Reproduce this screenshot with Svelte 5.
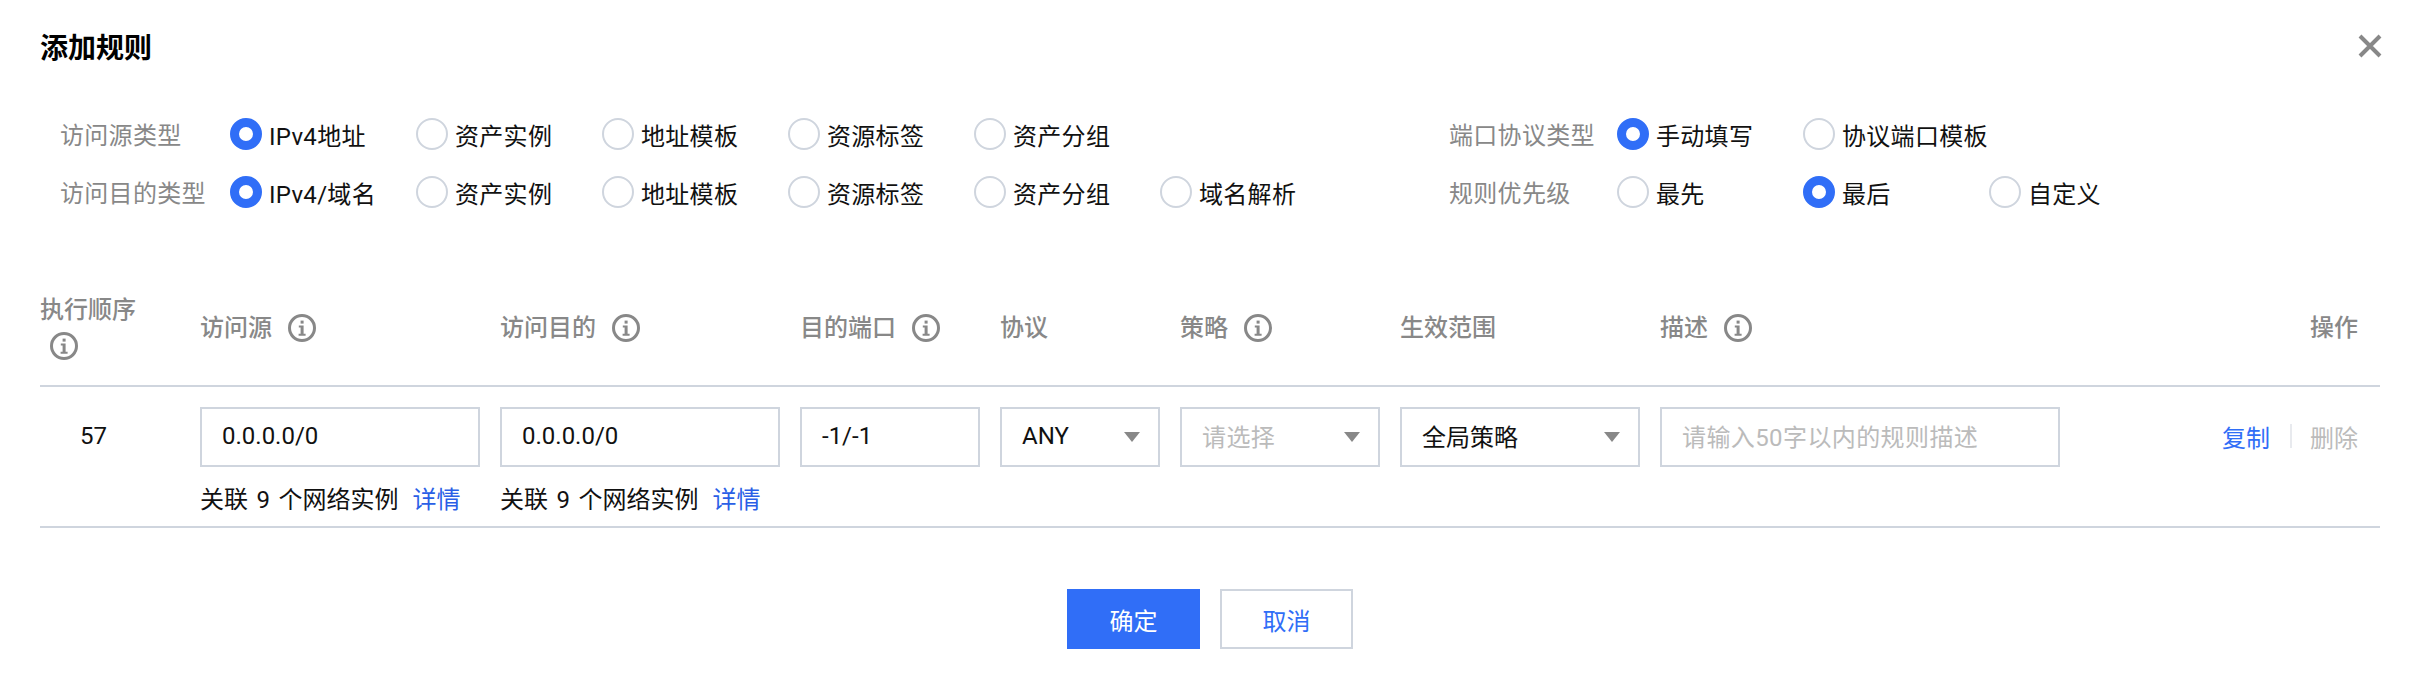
<script>
  const sourceTypes = [
    { label: 'IPv4地址', checked: true },
    { label: '资产实例' },
    { label: '地址模板' },
    { label: '资源标签' },
    { label: '资产分组' }
  ];
  const targetTypes = [
    { label: 'IPv4/域名', checked: true },
    { label: '资产实例' },
    { label: '地址模板' },
    { label: '资源标签' },
    { label: '资产分组' },
    { label: '域名解析' }
  ];
  const portTypes = [{ label: '手动填写', checked: true }, { label: '协议端口模板' }];
  const priorities = [{ label: '最先' }, { label: '最后', checked: true }, { label: '自定义' }];
</script>

{#snippet radios(options)}
  <div class="options">
    {#each options as option}
      <span class="option">
        <span class="radio" class:checked={option.checked}></span>
        {option.label}
      </span>
    {/each}
  </div>
{/snippet}

{#snippet info()}
  <svg class="info" viewBox="0 0 28 28" aria-hidden="true">
    <circle cx="14" cy="14" r="12.5" fill="none" stroke="#888" stroke-width="3" />
    <rect x="12.6" y="6.6" width="3" height="3" fill="#888" />
    <path d="M10.8 11.6h4.8v8.2h2v2h-7v-2h2v-6.2h-1.8z" fill="#888" />
  </svg>
{/snippet}

{#snippet caret()}
  <svg class="caret" viewBox="0 0 16 10" aria-hidden="true">
    <path d="M0 0h16L8 10z" fill="#888" />
  </svg>
{/snippet}

<div class="dialog">
  <header class="head">
    <h2>添加规则</h2>
    <svg class="close" viewBox="0 0 24 24" aria-label="关闭">
      <path d="M2 2l20 20M22 2L2 22" stroke="#888" stroke-width="4" fill="none" />
    </svg>
  </header>

  <section class="filters">
    <div class="filter-group left">
      <div class="filter-row">
        <span class="filter-label">访问源类型</span>
        {@render radios(sourceTypes)}
      </div>
      <div class="filter-row">
        <span class="filter-label">访问目的类型</span>
        {@render radios(targetTypes)}
      </div>
    </div>
    <div class="filter-group right">
      <div class="filter-row">
        <span class="filter-label">端口协议类型</span>
        {@render radios(portTypes)}
      </div>
      <div class="filter-row">
        <span class="filter-label">规则优先级</span>
        {@render radios(priorities)}
      </div>
    </div>
  </section>

  <table>
    <colgroup>
      <col class="c-order" />
      <col class="c-addr" />
      <col class="c-addr" />
      <col class="c-port" />
      <col class="c-proto" />
      <col class="c-policy" />
      <col class="c-scope" />
      <col />
    </colgroup>
    <thead>
      <tr>
        <th>执行顺序<br />{@render info()}</th>
        <th>访问源{@render info()}</th>
        <th>访问目的{@render info()}</th>
        <th>目的端口{@render info()}</th>
        <th>协议</th>
        <th>策略{@render info()}</th>
        <th>生效范围</th>
        <th class="split">
          <span>描述{@render info()}</span>
          <span>操作</span>
        </th>
      </tr>
    </thead>
    <tbody>
      <tr>
        <td><div class="order">57</div></td>
        <td>
          <div class="field w280">0.0.0.0/0</div>
          <div class="hint">关联 9 个网络实例<a href="#detail">详情</a></div>
        </td>
        <td>
          <div class="field w280">0.0.0.0/0</div>
          <div class="hint">关联 9 个网络实例<a href="#detail">详情</a></div>
        </td>
        <td><div class="field w180">-1/-1</div></td>
        <td><div class="field w160">ANY{@render caret()}</div></td>
        <td><div class="field w200 muted">请选择{@render caret()}</div></td>
        <td><div class="field w240">全局策略{@render caret()}</div></td>
        <td class="split">
          <div class="field w400 muted">请输入50字以内的规则描述</div>
          <div class="actions">
            <a href="#copy">复制</a>
            <i></i>
            <span>删除</span>
          </div>
        </td>
      </tr>
    </tbody>
  </table>

  <footer class="foot">
    <button class="primary">确定</button>
    <button>取消</button>
  </footer>
</div>

<style>
  :global(body) {
    margin: 0;
    background: #fff;
  }

  .dialog {
    width: 2424px;
    height: 692px;
    overflow: hidden;
    font-family: Roboto, 'Noto Sans CJK SC', sans-serif;
    font-size: 24px;
    color: #111;
  }

  .head {
    height: 92px;
    padding: 0 42px 0 40px;
    display: flex;
    align-items: center;
    justify-content: space-between;
  }

  h2 {
    margin: 0;
    font-size: 28px;
    font-weight: 700;
    color: #000;
  }

  .close {
    width: 24px;
    height: 24px;
  }

  .filters {
    display: flex;
    padding: 13px 0 0 60px;
  }

  .filter-group.left {
    width: 1389px;
  }

  .filter-row {
    height: 58px;
    display: flex;
    align-items: center;
    letter-spacing: 0.3px;
  }

  .filter-label {
    padding-bottom: 2px;
    color: #888;
  }

  .left .filter-label {
    width: 170px;
  }

  .right .filter-label {
    width: 168px;
  }

  .options {
    display: flex;
  }

  .option {
    width: 186px;
    display: flex;
    align-items: center;
    gap: 7px;
  }

  .radio {
    width: 32px;
    height: 32px;
    box-sizing: border-box;
    border: 2px solid #cfd5de;
    border-radius: 50%;
  }

  .radio.checked {
    border: 9px solid #306ef7;
  }

  table {
    width: 2340px;
    margin: 50px 0 0 40px;
    border-collapse: collapse;
    table-layout: fixed;
  }

  .c-order {
    width: 160px;
  }

  .c-addr {
    width: 300px;
  }

  .c-port {
    width: 200px;
  }

  .c-proto {
    width: 180px;
  }

  .c-policy {
    width: 220px;
  }

  .c-scope {
    width: 260px;
  }

  th {
    padding: 21px 0;
    line-height: 36px;
    font-weight: 500;
    color: #888;
    text-align: left;
    border-bottom: 2px solid #cfd5de;
  }

  td {
    padding: 20px 0 10px;
    vertical-align: top;
    border-bottom: 2px solid #cfd5de;
  }

  .split > :first-child {
    float: left;
  }

  .split > :last-child {
    float: right;
    padding-right: 22px;
  }

  .info {
    width: 28px;
    height: 28px;
    margin-left: 16px;
    vertical-align: -6px;
  }

  th > br + .info {
    margin-left: 10px;
  }

  .order {
    height: 60px;
    line-height: 58px;
    padding-left: 40px;
  }

  .field {
    height: 60px;
    box-sizing: border-box;
    padding: 0 18px 3px 20px;
    border: 2px solid #cfd5de;
    display: flex;
    align-items: center;
    justify-content: space-between;
  }

  .caret {
    margin-top: 3px;
    width: 16px;
    height: 10px;
  }

  .w160 {
    width: 160px;
  }

  .w180 {
    width: 180px;
  }

  .w200 {
    width: 200px;
  }

  .w240 {
    width: 240px;
  }

  .w280 {
    width: 280px;
  }

  .w400 {
    width: 400px;
  }

  .muted {
    color: #bbb;
    letter-spacing: 0.4px;
  }

  .hint {
    margin-top: 17px;
    height: 32px;
    line-height: 32px;
    word-spacing: 2.5px;
    white-space: nowrap;
  }

  .hint a {
    margin-left: 14px;
    color: #2a5fe6;
    text-decoration: none;
  }

  .actions {
    height: 58px;
    display: flex;
    align-items: center;
    color: #bbb;
  }

  .actions a {
    color: #306ef7;
    text-decoration: none;
  }

  .actions i {
    width: 2px;
    height: 24px;
    margin: 0 18px 0 20px;
    background: #e8eaee;
  }

  .foot {
    display: flex;
    justify-content: center;
    gap: 20px;
    padding: 61px 4px 0 0;
  }

  button {
    width: 133px;
    height: 60px;
    padding: 0;
    font: inherit;
    color: #306ef7;
    background: #fff;
    border: 2px solid #cfd5de;
  }

  button.primary {
    color: #fff;
    background: #306ef7;
    border-color: #306ef7;
  }
</style>
